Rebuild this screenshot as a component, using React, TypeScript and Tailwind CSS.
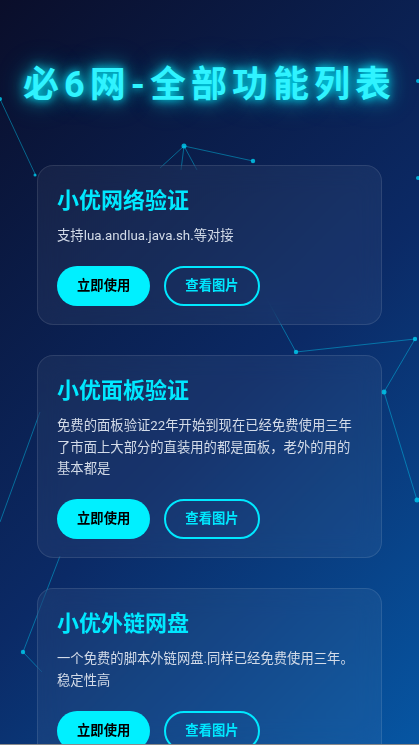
import React from "react";

type Card = { title: string; desc: string };

const cards: Card[] = [
  { title: "小优网络验证", desc: "支持lua.andlua.java.sh.等对接" },
  {
    title: "小优面板验证",
    desc: "免费的面板验证22年开始到现在已经免费使用三年了市面上大部分的直装用的都是面板，老外的用的基本都是",
  },
  {
    title: "小优外链网盘",
    desc: "一个免费的脚本外链网盘.同样已经免费使用三年。稳定性高",
  },
];

const lines: [number, number, number, number][] = [
  [0, 99, 36, 176],
  [184, 146, 253, 161],
  [184, 146, 160, 168],
  [184, 146, 181, 170],
  [184, 146, 197, 170],
  [262, 290, 296, 352],
  [296, 352, 415, 339],
  [415, 339, 384, 392],
  [384, 392, 417, 500],
  [0, 522, 40, 412],
  [60, 556, 23, 652],
  [23, 652, 42, 672],
];

const nodes: [number, number, number][] = [
  [0, 99, 2],
  [35, 175, 1.5],
  [184, 146, 2.5],
  [253, 161, 2.2],
  [418, 81, 2],
  [418, 178, 2],
  [296, 352, 2.2],
  [415, 339, 2.2],
  [384, 392, 2.5],
  [417, 500, 2.5],
  [23, 652, 2.2],
];

function Network() {
  return (
    <svg
      className="pointer-events-none absolute inset-0 h-full w-full"
      width="419"
      height="745"
      viewBox="0 0 419 745"
    >
      {lines.map(([x1, y1, x2, y2], i) => (
        <line
          key={i}
          x1={x1}
          y1={y1}
          x2={x2}
          y2={y2}
          stroke="rgba(0,200,240,0.45)"
          strokeWidth="1"
        />
      ))}
      {nodes.map(([cx, cy, r], i) => (
        <circle key={i} cx={cx} cy={cy} r={r} fill="rgba(0,205,240,0.8)" />
      ))}
    </svg>
  );
}

function FeatureCard({ title, desc }: Card) {
  return (
    <div className="rounded-[16px] border border-white/10 bg-white/[0.05] px-[19px] py-[18px] backdrop-blur-md">
      <h2 className="mb-[7px] text-[22px] font-bold leading-[34px] text-[#00e8ff]">
        {title}
      </h2>
      <p className="text-[13.33px] leading-[21.33px] text-[#d3dbe8]">{desc}</p>
      <div className="mt-5 flex gap-[14px]">
        <button className="h-10 rounded-full bg-[#00f0ff] px-5 text-[13.33px] font-bold text-black">
          立即使用
        </button>
        <button className="h-10 rounded-full border-2 border-[#00e8ff] px-[19px] text-[13.33px] font-bold text-[#00e8ff]">
          查看图片
        </button>
      </div>
    </div>
  );
}

export default function App() {
  return (
    <div className="relative h-screen w-full overflow-hidden bg-[linear-gradient(135deg,#0a0e2a_0%,#0b2a66_55%,#0656a3_100%)] font-['Roboto','Noto_Sans_CJK_SC',sans-serif]">
      <Network />
      <div className="relative pt-[58px]">
        <h1 className="whitespace-nowrap text-center text-[36px] font-bold leading-[54px] tracking-[5px] text-[#2ff3ff] [text-shadow:0_0_8px_rgba(0,240,255,0.9),0_0_18px_rgba(0,240,255,0.6),0_0_30px_rgba(0,240,255,0.35)]">
          必6网-全部功能列表
        </h1>
        <div className="mt-[53px] flex flex-col gap-[30px] px-[37px]">
          {cards.map((c) => (
            <FeatureCard key={c.title} {...c} />
          ))}
        </div>
      </div>
      <div className="absolute bottom-0 left-0 right-0 h-px bg-[#8a8a8a]" />
    </div>
  );
}
